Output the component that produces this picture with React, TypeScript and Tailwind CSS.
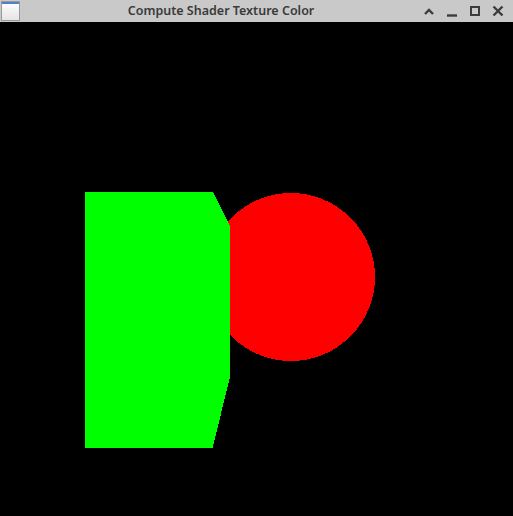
export default function App() {
  return (
    <div className="flex h-[516px] w-[513px] flex-col bg-black" style={{ fontFamily: '"Noto Sans", sans-serif' }}>
      <div className="flex h-[22px] items-center bg-[#c9c9c9]">
        <div className="ml-[1px] h-[20px] w-[19px] border border-[#9a9a9a] bg-gradient-to-b from-white to-[#e4e4e4]">
          <div className="h-[2px] bg-[#4f7fd0]" />
        </div>
        <div className="flex-1 text-center text-[12.5px] font-semibold leading-none text-[#3a3a3a]">
          Compute Shader Texture Color
        </div>
        <div className="mr-[8px] flex items-center gap-[9px]">
          <svg width="14" height="14" viewBox="0 0 14 14">
            <path d="M3 10 L7 6 L11 10" fill="none" stroke="#3c3c3c" strokeWidth="2.4" />
          </svg>
          <svg width="14" height="14" viewBox="0 0 14 14">
            <path d="M2 11.5 H12" stroke="#3c3c3c" strokeWidth="2.4" />
          </svg>
          <svg width="14" height="14" viewBox="0 0 14 14">
            <rect x="3" y="3" width="8" height="8" fill="none" stroke="#3c3c3c" strokeWidth="2" />
          </svg>
          <svg width="14" height="14" viewBox="0 0 14 14">
            <path d="M2.5 2.5 L11.5 11.5 M11.5 2.5 L2.5 11.5" stroke="#3c3c3c" strokeWidth="2.4" />
          </svg>
        </div>
      </div>
      <svg width="513" height="494" viewBox="0 0 513 494" shapeRendering="crispEdges">
        <circle cx="291" cy="255" r="84" fill="#ff0000" />
        <polygon points="85,169.5 212.5,169.5 229.5,203 229.5,357 212.5,426 85,426" fill="#00ff00" />
      </svg>
    </div>
  );
}
